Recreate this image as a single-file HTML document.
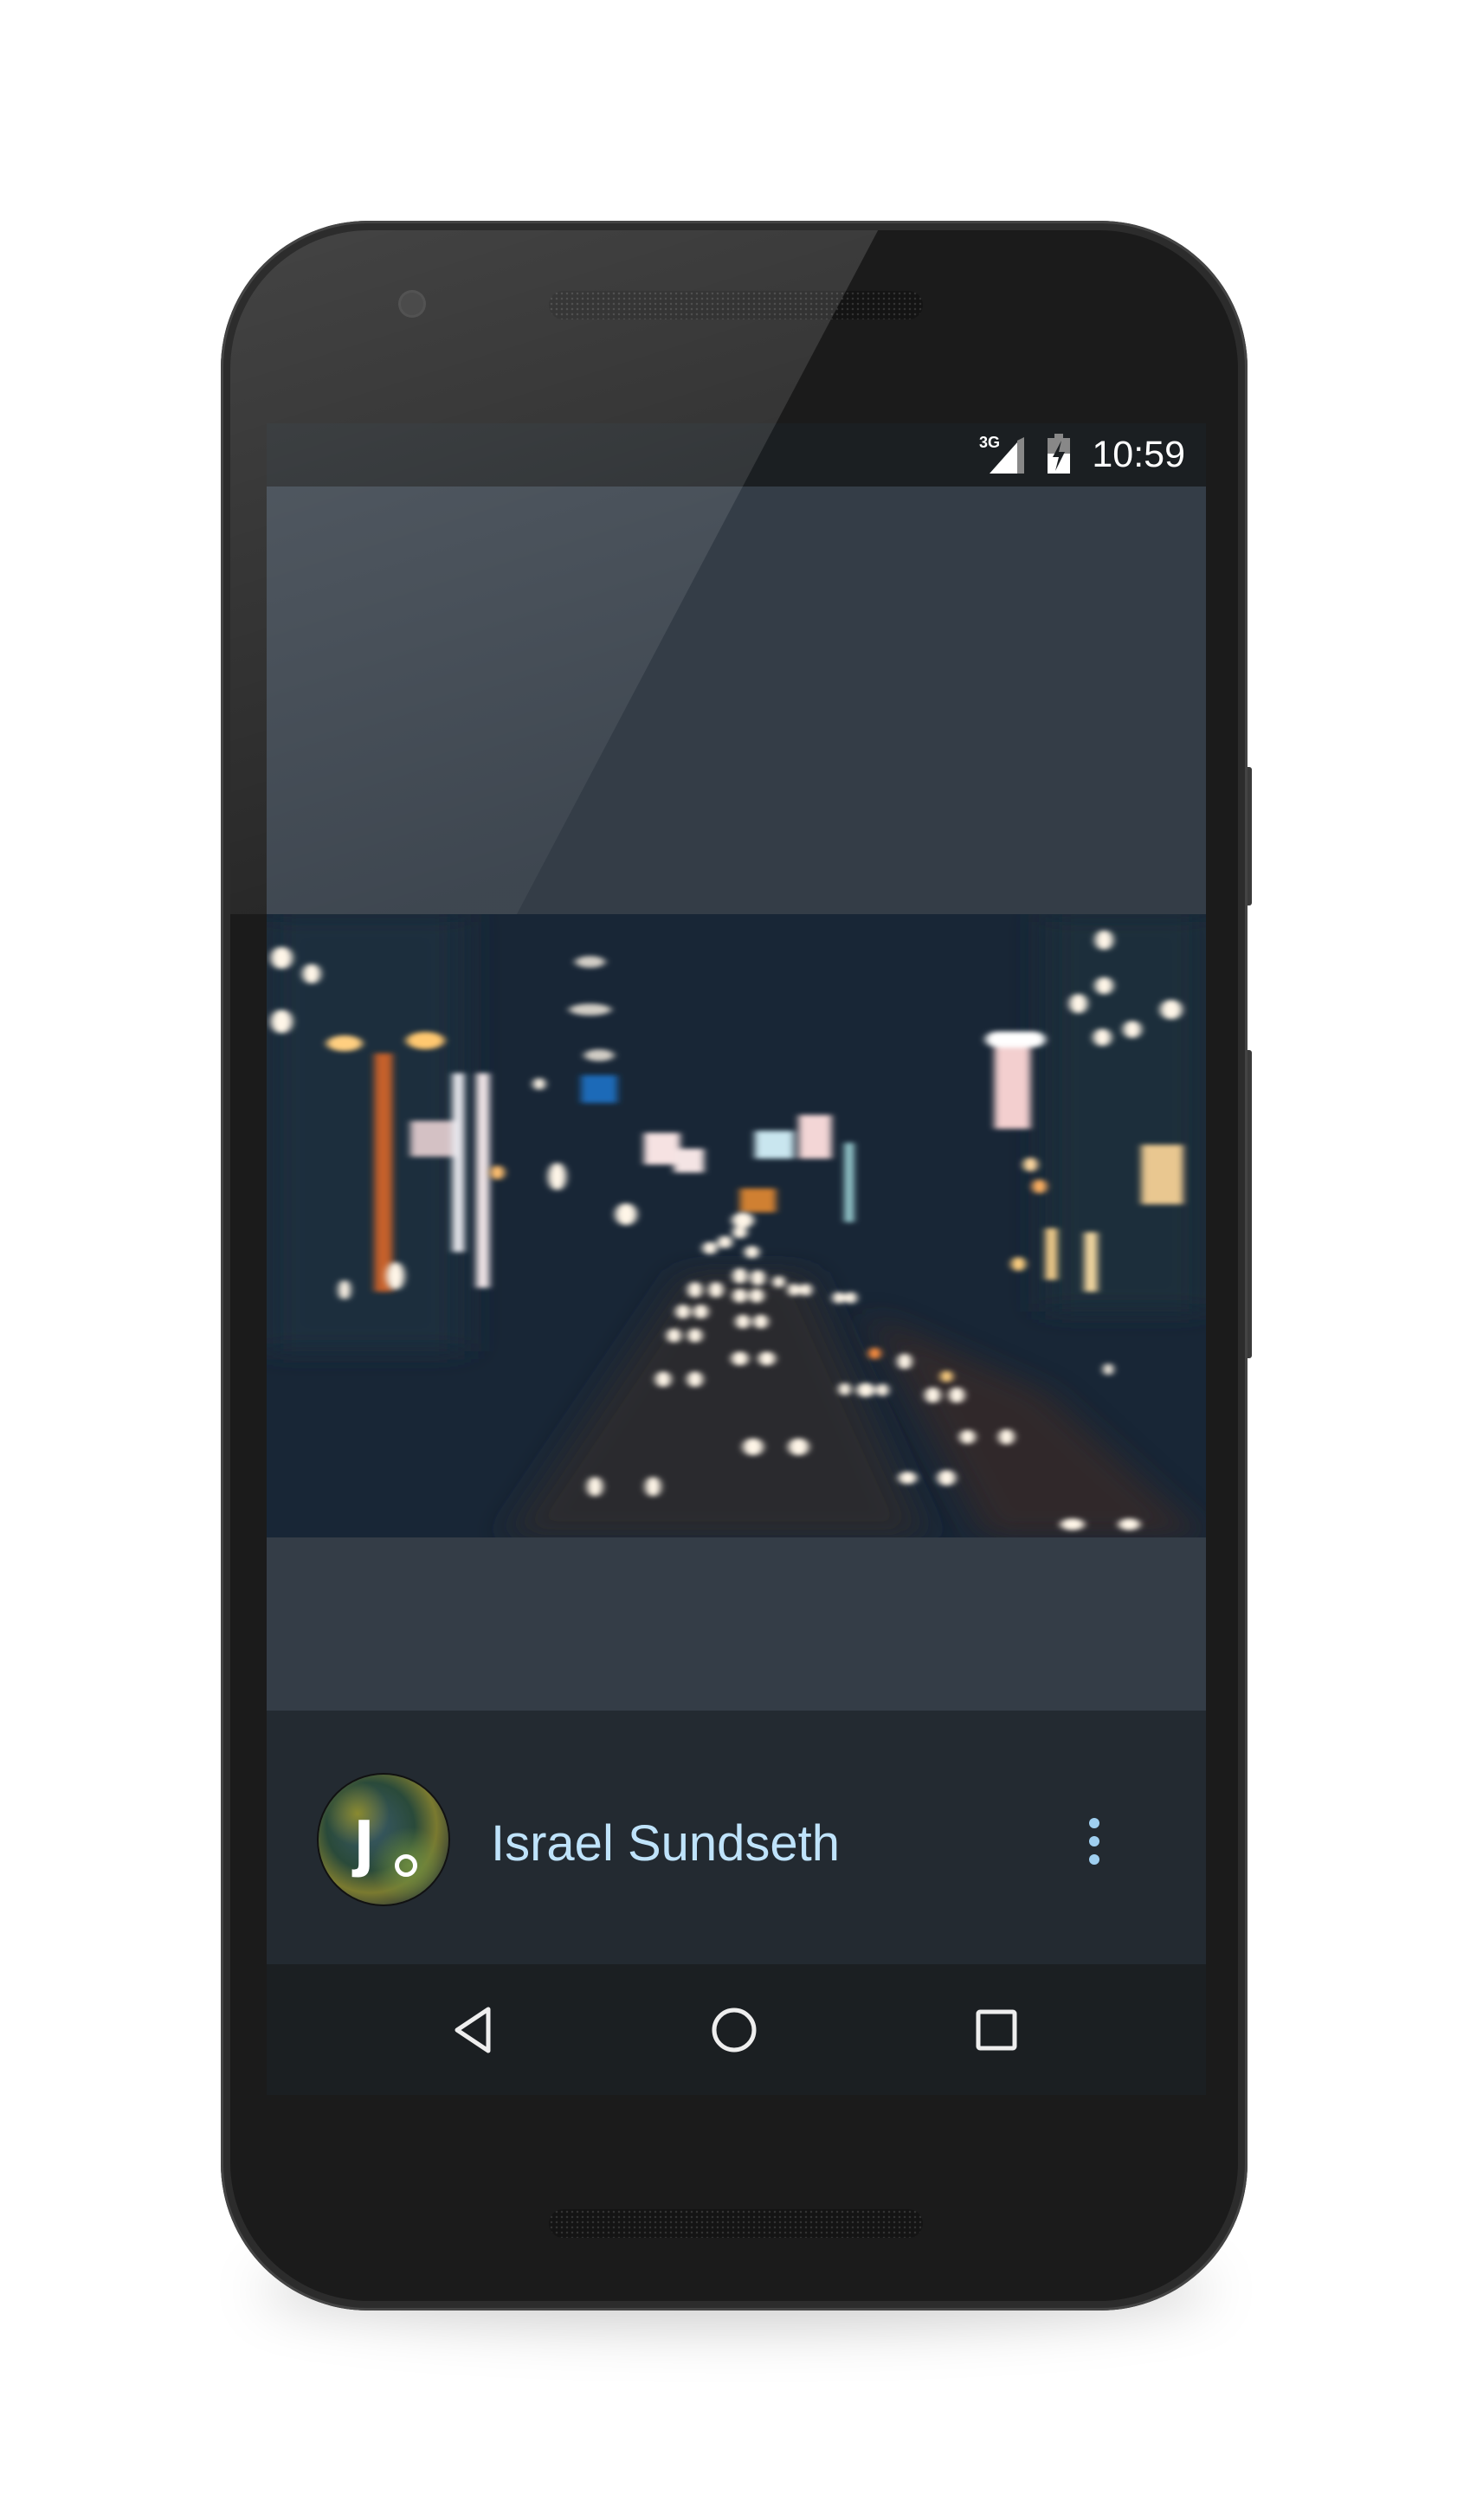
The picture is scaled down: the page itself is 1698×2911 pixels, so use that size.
<!DOCTYPE html>
<html><head><meta charset="utf-8"><style>
html,body{margin:0;padding:0;background:#fff;}
body{width:1698px;height:2911px;position:relative;overflow:hidden;font-family:"Liberation Sans",sans-serif;}
.abs{position:absolute;}
</style></head><body>
<div class="abs" style="left:300px;top:2600px;width:1100px;height:90px;border-radius:50%;background:rgba(0,0,0,0.18);filter:blur(30px);"></div>
<div class="abs" style="left:1436px;top:886px;width:10px;height:160px;background:#3a3a3a;border-radius:3px;"></div>
<div class="abs" style="left:1436px;top:1213px;width:10px;height:356px;background:#3a3a3a;border-radius:3px;"></div>
<div class="abs" style="left:255px;top:255px;width:1186px;height:2414px;border-radius:170px;background:#2c2c2c;box-shadow:inset 0 0 0 3px #444;"></div>
<div class="abs" style="left:266px;top:266px;width:1164px;height:2392px;border-radius:160px;background:#1b1b1b;"></div>
<div class="abs" style="left:463px;top:338px;width:26px;height:26px;border-radius:50%;background:#2a2a2a;box-shadow:0 0 0 3px #333;"></div>
<div class="abs" style="left:634px;top:336px;width:432px;height:33px;border-radius:17px;background:#141414;background-image:radial-gradient(#333 1px,transparent 1.5px);background-size:6px 6px;"></div>
<div class="abs" style="left:634px;top:2552px;width:432px;height:33px;border-radius:17px;background:#141414;background-image:radial-gradient(#333 1px,transparent 1.5px);background-size:6px 6px;"></div>
<div class="abs" style="left:308px;top:489px;width:1085px;height:1931px;overflow:hidden;background:#343d47;">
  <div class="abs" style="left:0;top:0;width:1085px;height:73px;background:#1b1f22;"></div>
  <div class="abs" style="left:823px;top:12px;font-size:18px;font-weight:bold;color:#fff;">3G</div>
  <svg class="abs" style="left:835px;top:16px" width="42" height="42"><polygon points="0,42 32,6 32,42" fill="#fff"/><polygon points="32,4 40,0 40,42 32,42" fill="#888"/></svg>
  <svg class="abs" style="left:902px;top:12px" width="26" height="46"><rect x="8" y="0" width="10" height="5" fill="#888"/><rect x="0" y="5" width="26" height="41" fill="#fff"/><rect x="0" y="5" width="26" height="18" fill="#888"/><polygon points="16,8 6,27 13,27 9,43 20,21 13,21" fill="#1b1f22"/></svg>
  <div class="abs" style="left:944px;top:6px;width:117px;text-align:right;font-size:43px;color:#fff;line-height:60px;">10:59</div>
  <div class="abs" style="left:0;top:567px;width:1085px;height:720px;background:#1a2838;overflow:hidden;">
    <svg width="1085" height="720" viewBox="0 0 1568 1568" preserveAspectRatio="none">
      <defs><filter id="b" x="-50%" y="-50%" width="200%" height="200%"><feGaussianBlur stdDeviation="6"/></filter>
      <filter id="b2" x="-50%" y="-50%" width="200%" height="200%"><feGaussianBlur stdDeviation="30"/></filter></defs>
      <rect x="0" y="0" width="1568" height="1568" fill="#182636"/>
      <rect x="0" y="0" width="330" height="1100" fill="#1f2e3c" filter="url(#b2)"/>
      <rect x="1300" y="0" width="268" height="1000" fill="#1f2d3b" filter="url(#b2)"/>
      <polygon points="400,1568 700,900 900,900 1100,1568" fill="#2a2a2e" filter="url(#b2)"/>
      <polygon points="1000,1000 1300,1200 1568,1568 1200,1568" fill="#3a2a26" filter="url(#b2)" opacity="0.7"/>
      <g filter="url(#b)">
        <rect x="180" y="350" width="30" height="600" fill="#c5602a"/>
        <rect x="310" y="400" width="20" height="450" fill="#e8e8ee"/>
        <rect x="350" y="400" width="22" height="540" fill="#f2e6e8"/>
        <rect x="1215" y="310" width="60" height="230" fill="#f3cfcf"/>
        <rect x="1200" y="295" width="100" height="40" rx="20" fill="#fff"/>
        <rect x="630" y="550" width="60" height="80" fill="#f6e2e2"/>
        <rect x="680" y="590" width="50" height="60" fill="#f4e4e4"/>
        <rect x="815" y="545" width="65" height="70" fill="#c9e6ef"/>
        <rect x="888" y="505" width="55" height="110" fill="#f3d6d6"/>
        <rect x="525" y="405" width="60" height="70" fill="#1c6ab8"/>
        <rect x="965" y="575" width="15" height="200" fill="#9ed4d8"/>
        <rect x="1460" y="580" width="70" height="150" fill="#e9c790"/>
        <rect x="1300" y="790" width="20" height="130" fill="#f1cc8a"/>
        <rect x="1365" y="800" width="22" height="150" fill="#f4d8a0"/>
        <rect x="240" y="520" width="70" height="90" fill="#d4c1c4"/>
        <rect x="790" y="690" width="60" height="60" fill="#d08030"/>
      </g>
      <g filter="url(#b)" fill="#fff6e8">
        <ellipse cx="130" cy="325" rx="30" ry="20" fill="#ffcf80"/>
        <ellipse cx="265" cy="318" rx="32" ry="22" fill="#ffc870"/>
        <ellipse cx="455" cy="427" rx="10" ry="15"/>
        <ellipse cx="1398" cy="65" rx="15" ry="25"/><ellipse cx="1398" cy="180" rx="15" ry="22"/>
        <ellipse cx="1355" cy="225" rx="15" ry="25"/><ellipse cx="1510" cy="240" rx="18" ry="25"/>
        <ellipse cx="1445" cy="290" rx="15" ry="22"/><ellipse cx="1395" cy="310" rx="15" ry="22"/>
        <ellipse cx="25" cy="110" rx="18" ry="28"/><ellipse cx="25" cy="270" rx="18" ry="30"/><ellipse cx="75" cy="150" rx="15" ry="25"/>
        <ellipse cx="1275" cy="630" rx="12" ry="18" fill="#ffd9a0"/>
        <ellipse cx="795" cy="770" rx="18" ry="20"/><ellipse cx="790" cy="800" rx="12" ry="16"/>
        <ellipse cx="765" cy="825" rx="12" ry="16"/><ellipse cx="740" cy="840" rx="12" ry="16"/><ellipse cx="810" cy="850" rx="12" ry="16"/>
        <ellipse cx="790" cy="910" rx="12" ry="20"/><ellipse cx="820" cy="915" rx="12" ry="20"/>
        <ellipse cx="715" cy="945" rx="12" ry="20"/><ellipse cx="750" cy="945" rx="12" ry="20"/>
        <ellipse cx="790" cy="960" rx="12" ry="18"/><ellipse cx="818" cy="960" rx="12" ry="18"/>
        <ellipse cx="855" cy="925" rx="10" ry="15"/><ellipse cx="880" cy="945" rx="10" ry="16"/><ellipse cx="900" cy="945" rx="10" ry="16"/>
        <ellipse cx="955" cy="965" rx="10" ry="15"/><ellipse cx="975" cy="965" rx="10" ry="15"/>
        <ellipse cx="695" cy="1000" rx="12" ry="18"/><ellipse cx="725" cy="1000" rx="12" ry="18"/>
        <ellipse cx="795" cy="1025" rx="12" ry="18"/><ellipse cx="825" cy="1025" rx="12" ry="18"/>
        <ellipse cx="680" cy="1060" rx="12" ry="18"/><ellipse cx="715" cy="1060" rx="12" ry="18"/>
        <ellipse cx="790" cy="1118" rx="14" ry="18"/><ellipse cx="835" cy="1118" rx="14" ry="18"/>
        <ellipse cx="662" cy="1170" rx="13" ry="20"/><ellipse cx="715" cy="1170" rx="13" ry="20"/>
        <ellipse cx="965" cy="1195" rx="10" ry="16"/><ellipse cx="1000" cy="1197" rx="15" ry="18"/><ellipse cx="1028" cy="1197" rx="10" ry="16"/>
        <ellipse cx="1112" cy="1210" rx="13" ry="20"/><ellipse cx="1152" cy="1210" rx="13" ry="20"/>
        <ellipse cx="1065" cy="1125" rx="12" ry="20"/><ellipse cx="1135" cy="1163" rx="10" ry="15" fill="#ffd080"/>
        <ellipse cx="1170" cy="1315" rx="13" ry="18"/><ellipse cx="1235" cy="1315" rx="13" ry="20"/>
        <ellipse cx="812" cy="1340" rx="17" ry="22"/><ellipse cx="888" cy="1340" rx="17" ry="22"/>
        <ellipse cx="548" cy="1440" rx="13" ry="25"/><ellipse cx="645" cy="1440" rx="13" ry="25"/>
        <ellipse cx="1135" cy="1418" rx="15" ry="20"/><ellipse cx="1070" cy="1418" rx="15" ry="16"/>
        <ellipse cx="130" cy="945" rx="10" ry="25"/><ellipse cx="215" cy="910" rx="15" ry="35"/>
        <ellipse cx="600" cy="755" rx="18" ry="28"/><ellipse cx="485" cy="660" rx="15" ry="35"/>
        <ellipse cx="1405" cy="1145" rx="8" ry="15"/>
        <ellipse cx="1345" cy="1535" rx="20" ry="15"/><ellipse cx="1440" cy="1535" rx="18" ry="15"/>
        <ellipse cx="385" cy="650" rx="12" ry="18" fill="#ffc070"/><ellipse cx="1255" cy="880" rx="12" ry="18" fill="#ffd080"/>
        <ellipse cx="1290" cy="685" rx="12" ry="18" fill="#ffb060"/><ellipse cx="1015" cy="1105" rx="10" ry="15" fill="#ff9040"/>
        <ellipse cx="540" cy="120" rx="25" ry="15" opacity="0.8"/><ellipse cx="540" cy="240" rx="35" ry="15" opacity="0.8"/><ellipse cx="555" cy="355" rx="25" ry="15" opacity="0.8"/>
      </g>
    </svg>
  </div>
  <div class="abs" style="left:0;top:1287px;width:1085px;height:200px;background:#343d47;"></div>
  <div class="abs" style="left:0;top:1487px;width:1085px;height:293px;background:#232a31;"></div>
  <div class="abs" style="left:60px;top:1561px;width:150px;height:150px;border-radius:50%;background:radial-gradient(circle at 30% 30%,#8a8a30 0%,transparent 25%),radial-gradient(circle at 70% 70%,#6a8a40 0%,transparent 30%),radial-gradient(circle at 40% 40%,#3a5a6a,#2a4a3a 40%,#7a7a30 60%,#1c2a38 85%);box-shadow:0 0 0 2px #111;"></div>
  <div class="abs" style="left:100px;top:1581px;font-size:90px;font-weight:bold;color:#fff;line-height:100px;">ȷ</div>
  <div class="abs" style="left:148px;top:1653px;width:16px;height:16px;border-radius:50%;border:5px solid #fff;"></div>
  <div class="abs" style="left:259px;top:1601px;font-size:58px;color:#bfe3fb;line-height:80px;">Israel Sundseth</div>
  <div class="abs" style="left:950px;top:1611px;width:12px;height:12px;border-radius:50%;background:#9fcff0;"></div>
  <div class="abs" style="left:950px;top:1632px;width:12px;height:12px;border-radius:50%;background:#9fcff0;"></div>
  <div class="abs" style="left:950px;top:1653px;width:12px;height:12px;border-radius:50%;background:#9fcff0;"></div>
  <div class="abs" style="left:0;top:1780px;width:1085px;height:151px;background:#1b1f22;"></div>
  <svg class="abs" style="left:210px;top:1826px" width="60" height="60"><polygon points="46,6 46,54 10,30" fill="none" stroke="#eee" stroke-width="5" stroke-linejoin="round"/></svg>
  <svg class="abs" style="left:510px;top:1826px" width="60" height="60"><circle cx="30" cy="30" r="23" fill="none" stroke="#eee" stroke-width="5"/></svg>
  <svg class="abs" style="left:813px;top:1826px" width="60" height="60"><rect x="9" y="9" width="42" height="42" rx="2" fill="none" stroke="#eee" stroke-width="5"/></svg>
</div>
<svg class="abs" style="left:0;top:0" width="1698" height="1100">
  <defs>
    <clipPath id="ph"><rect x="266" y="266" width="1164" height="2392" rx="160"/></clipPath>
    <linearGradient id="g" x1="0" y1="0" x2="0.3" y2="1"><stop offset="0" stop-color="#fff" stop-opacity="0.18"/><stop offset="1" stop-color="#fff" stop-opacity="0.05"/></linearGradient>
  </defs>
  <polygon clip-path="url(#ph)" points="255,255 1020,255 597,1056 255,1056" fill="url(#g)"/>
</svg>
</body></html>
